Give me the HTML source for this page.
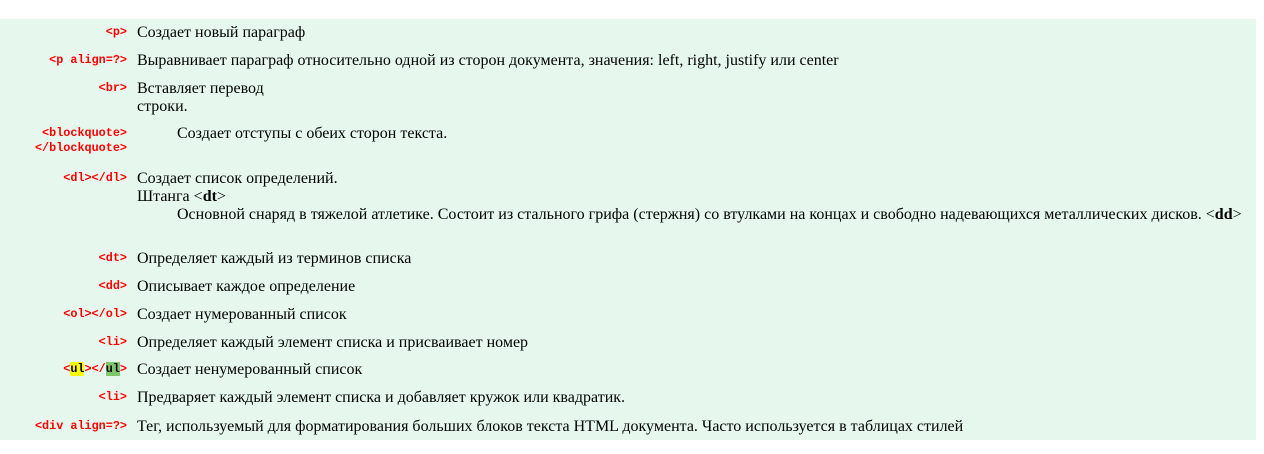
<!DOCTYPE html>
<html><head><meta charset="utf-8"><style>
body{margin:0;width:1264px;height:454px;background:#fff;position:relative;overflow:hidden}
.bg{position:absolute;left:0;top:19px;width:1256px;height:421px;background:#e6f8ee}
.c{position:absolute;right:1137px;font-family:"Liberation Mono",monospace;font-size:11.8px;font-weight:bold;color:#f00;line-height:15px;text-align:right;white-space:nowrap}
.t{position:absolute;left:137px;font-family:"Liberation Serif",serif;font-size:16px;color:#000;line-height:18px;white-space:nowrap}
.y{background:#ff0;color:#000}.g{background:#7ec86a;color:#000}
</style></head><body>
<div class="bg"></div>
<div class="c" style="top:25px">&lt;p&gt;</div><div class="t" style="top:24px">Создает новый параграф</div>
<div class="c" style="top:53px">&lt;p align=?&gt;</div><div class="t" style="top:52px">Выравнивает параграф относительно одной из сторон документа, значения: left, right, justify или center</div>
<div class="c" style="top:81px">&lt;br&gt;</div><div class="t" style="top:80px">Вставляет перевод<br>строки.</div>
<div class="c" style="top:126px">&lt;blockquote&gt;<br>&lt;/blockquote&gt;</div><div class="t" style="top:125px;left:177px">Создает отступы с обеих сторон текста.</div>
<div class="c" style="top:171px">&lt;dl&gt;&lt;/dl&gt;</div><div class="t" style="top:170px">Создает список определений.<br>Штанга &lt;<b>dt</b>&gt;<br><span style="padding-left:40px">Основной снаряд в тяжелой атлетике. Состоит из стального грифа (стержня) со втулками на концах и свободно надевающихся металлических дисков. &lt;<b>dd</b>&gt;</span></div>
<div class="c" style="top:251px">&lt;dt&gt;</div><div class="t" style="top:250px">Определяет каждый из терминов списка</div>
<div class="c" style="top:279px">&lt;dd&gt;</div><div class="t" style="top:278px">Описывает каждое определение</div>
<div class="c" style="top:307px">&lt;ol&gt;&lt;/ol&gt;</div><div class="t" style="top:306px">Создает нумерованный список</div>
<div class="c" style="top:335px">&lt;li&gt;</div><div class="t" style="top:334px">Определяет каждый элемент списка и присваивает номер</div>
<div class="c" style="top:362px">&lt;<span class="y">ul</span>&gt;&lt;/<span class="g">ul</span>&gt;</div><div class="t" style="top:361px">Создает ненумерованный список</div>
<div class="c" style="top:390px">&lt;li&gt;</div><div class="t" style="top:389px">Предваряет каждый элемент списка и добавляет кружок или квадратик.</div>
<div class="c" style="top:419px">&lt;div align=?&gt;</div><div class="t" style="top:418px">Тег, используемый для форматирования больших блоков текста HTML документа. Часто используется в таблицах стилей</div>
</body></html>
